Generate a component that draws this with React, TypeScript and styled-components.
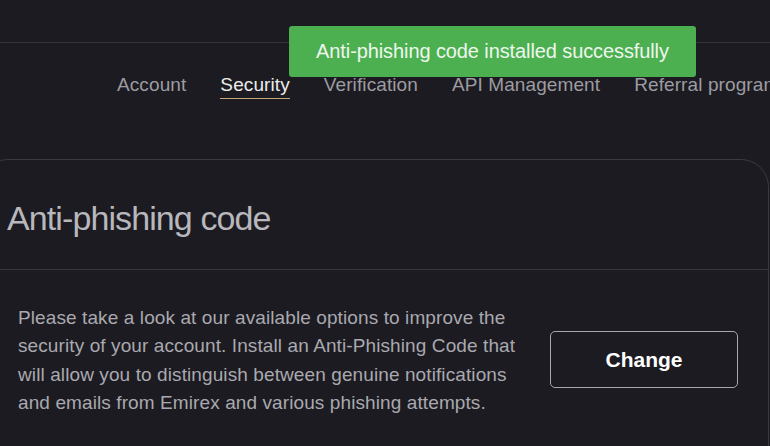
import styled, { createGlobalStyle } from "styled-components";

const GlobalStyle = createGlobalStyle`
  html, body {
    margin: 0;
    padding: 0;
    background: #1c1b21;
    overflow: hidden;
  }
  body {
    font-family: "Liberation Sans", Arial, sans-serif;
  }
`;

const Page = styled.div`
  position: relative;
  width: 770px;
  height: 446px;
  overflow: hidden;
  background: #1c1b21;
`;

const TopBar = styled.div`
  height: 42px;
  border-bottom: 1px solid #34333a;
`;

const Toast = styled.div`
  position: absolute;
  top: 26px;
  left: 289px;
  width: 407px;
  height: 51px;
  border-radius: 3px;
  background: #4caf50;
  color: #eef7ee;
  font-size: 20px;
  letter-spacing: -0.1px;
  display: flex;
  align-items: center;
  justify-content: center;
`;

const Nav = styled.nav`
  display: flex;
  gap: 34px;
  padding: 30px 0 0 117px;
  height: 85px;
  box-sizing: border-box;
  white-space: nowrap;
`;

const NavItem = styled.a<{ $active?: boolean }>`
  font-size: 19px;
  letter-spacing: 0.1px;
  line-height: 24px;
  height: 26px;
  color: ${(p) => (p.$active ? "#ececec" : "#9c9ca2")};
  border-bottom: 1px solid ${(p) => (p.$active ? "#c9a679" : "transparent")};
  box-sizing: border-box;
  text-decoration: none;
`;

const Card = styled.section`
  margin: 31px 0 0 -20px;
  width: 789px;
  height: 320px;
  border: 1px solid #3a3940;
  border-radius: 28px;
  box-sizing: border-box;
`;

const CardHead = styled.div`
  height: 110px;
  border-bottom: 1px solid #37363d;
  padding: 38px 0 0 26px;
  box-sizing: border-box;
`;

const Title = styled.h2`
  margin: 0;
  font-size: 34px;
  font-weight: 400;
  letter-spacing: -0.9px;
  line-height: 40px;
  color: #b7b7bc;
`;

const CardBody = styled.div`
  display: flex;
  align-items: center;
  gap: 20px;
  padding: 34px 0 0 37px;
`;

const Text = styled.p`
  margin: 0;
  width: 512px;
  font-size: 19px;
  line-height: 28.3px;
  letter-spacing: 0.1px;
  color: #a9a9af;
`;

const Button = styled.button`
  width: 188px;
  height: 57px;
  flex-shrink: 0;
  border: 1px solid #a8a8ac;
  border-radius: 5px;
  background: transparent;
  color: #ffffff;
  font-family: inherit;
  font-size: 21px;
  font-weight: 700;
  margin-top: -2px;
`;

export default function App() {
  const tabs = ["Account", "Security", "Verification", "API Management", "Referral program"];
  return (
    <Page>
      <GlobalStyle />
      <TopBar />
      <Nav>
        {tabs.map((t) => (
          <NavItem key={t} $active={t === "Security"}>
            {t}
          </NavItem>
        ))}
      </Nav>
      <Card>
        <CardHead>
          <Title>Anti-phishing code</Title>
        </CardHead>
        <CardBody>
          <Text>
            Please take a look at our available options to improve the security of your
            account. Install an Anti-Phishing Code that will allow you to distinguish between
            genuine notifications and emails from Emirex and various phishing attempts.
          </Text>
          <Button>Change</Button>
        </CardBody>
      </Card>
      <Toast>Anti-phishing code installed successfully</Toast>
    </Page>
  );
}
